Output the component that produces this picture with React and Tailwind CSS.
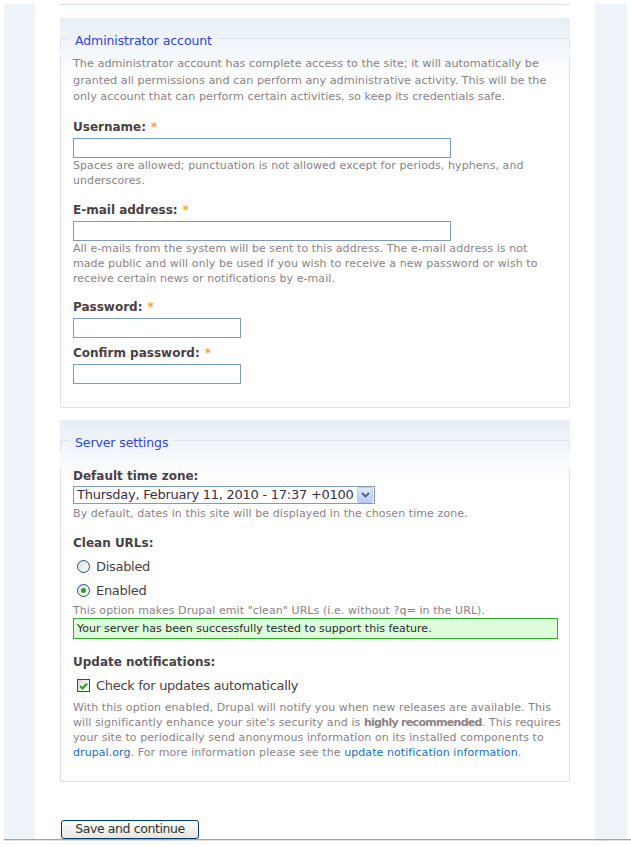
const tahoma = "font-['DejaVu_Sans',sans-serif]"

function Legend({ children }) {
  return (
    <div className="flex">
      <div className="w-[9px] mt-[5px] border-t border-l border-[#d8e5ef]" />
      <span className={`${tahoma} px-[6px] text-[12.5px] leading-[16px] tracking-[-0.1px] text-[#2b44d6]`}>{children}</span>
      <div className="flex-1 mt-[5px] border-t border-r border-[#d8e5ef]" />
    </div>
  )
}

function Label({ children, required, className = '' }) {
  return (
    <div className={`text-[12px] leading-[16px] font-bold text-[#4a4145] ${className}`}>
      {children}
      {required && <span className="ml-[5px] text-[#f8a51c]">*</span>}
    </div>
  )
}

function Desc({ children, className = '' }) {
  return <div className={`text-[11px] leading-[15px] tracking-[0.08px] text-[#8b8287] ${className}`}>{children}</div>
}

function TextInput({ width }) {
  return <div className={`${width} h-[20px] mt-[3px] border border-[#7f9db9] bg-white`} />
}

function Radio({ checked, label }) {
  return (
    <div className="flex items-center h-[24px] pl-[4px]">
      <span className="w-[13px] h-[13px] rounded-full border border-[#1c5180] bg-gradient-to-br from-[#dcdcd6] to-white flex items-center justify-center">
        {checked && <span className="w-[5px] h-[5px] rounded-full bg-[#21a121]" />}
      </span>
      <span className={`${tahoma} ml-[6px] text-[13px] tracking-[-0.3px] text-[#4a4145]`}>{label}</span>
    </div>
  )
}

export default function App() {
  return (
    <div className="w-[631px] h-[847px] bg-white pt-[4px] font-['DejaVu_Sans',sans-serif] overflow-hidden">
      <div className="flex h-[835px] pl-[4px] pr-[4px]">
        <div className="w-[31px] bg-[#edf4fa]" />
        <div className="w-[560px] px-[25px]">
          <div className="border-t border-[#d3e4f0]" />

          {/* Administrator account */}
          <div className="mt-[13px] pt-[15px] bg-gradient-to-b from-[#e6eef6] to-white to-[60px] bg-no-repeat">
            <Legend>Administrator account</Legend>
            <div className="border-x border-b border-[#d8e5ef] px-[12px] pb-[23px]">
              <p className={`${tahoma} mt-[7px] text-[11.25px] leading-[16.5px] text-[#8b8287]`}>
                The administrator account has complete access to the site; it will automatically be granted all permissions and can perform any administrative activity. This will be the only account that can perform certain activities, so keep its credentials safe.
              </p>

              <Label required className="mt-[13px]">Username:</Label>
              <TextInput width="w-[378px]" />
              <Desc>Spaces are allowed; punctuation is not allowed except for periods, hyphens, and underscores.</Desc>

              <Label required className="mt-[14px]">E-mail address:</Label>
              <TextInput width="w-[378px]" />
              <Desc>All e-mails from the system will be sent to this address. The e-mail address is not made public and will only be used if you wish to receive a new password or wish to receive certain news or notifications by e-mail.</Desc>

              <Label required className="mt-[13px]">Password:</Label>
              <TextInput width="w-[168px]" />

              <Label required className="mt-[7px]">Confirm password:</Label>
              <TextInput width="w-[168px]" />
            </div>
          </div>

          {/* Server settings */}
          <div className="mt-[12px] pt-[15px] bg-gradient-to-b from-[#e6eef6] to-white to-[60px] bg-no-repeat">
            <Legend>Server settings</Legend>
            <div className="border-x border-b border-[#d8e5ef] px-[12px] pb-[21px]">
              <Label className="mt-[17px]">Default time zone:</Label>
              <div className="mt-[2px] w-[302px] h-[18px] border border-[#7f9db9] bg-white flex items-center">
                <span className={`${tahoma} flex-1 pl-[3px] text-[13px] leading-[16px] tracking-[-0.25px] text-[#3b2f45]`}>
                  Thursday, February 11, 2010 - 17:37 +0100
                </span>
                <span className="w-[16px] h-[16px] mr-px rounded-[2px] border border-[#b4c8f4] bg-gradient-to-b from-[#dfe8fd] to-[#b9cdf6] flex items-center justify-center">
                  <svg width="9" height="6" viewBox="0 0 9 6">
                    <path d="M1 1 L4.5 4.5 L8 1" fill="none" stroke="#4d6185" strokeWidth="1.8" />
                  </svg>
                </span>
              </div>
              <Desc className="mt-[2px]">By default, dates in this site will be displayed in the chosen time zone.</Desc>

              <Label className="mt-[14px]">Clean URLs:</Label>
              <div className="mt-[4px]">
                <Radio label="Disabled" />
                <Radio checked label="Enabled" />
              </div>
              <Desc>This option makes Drupal emit "clean" URLs (i.e. without ?q= in the URL).</Desc>
              <div className="w-[485px] h-[21px] border border-[#2fb12f] bg-[#dcfcda] pl-[3px] text-[11px] leading-[19px] text-[#2a2a2a]">
                Your server has been successfully tested to support this feature.
              </div>

              <Label className="mt-[15px]">Update notifications:</Label>
              <div className="mt-[4px] flex items-center h-[24px] pl-[4px]">
                <span className="w-[13px] h-[13px] border border-[#1c5180] bg-gradient-to-br from-[#dcdcd6] to-white flex items-center justify-center">
                  <svg width="9" height="8" viewBox="0 0 9 8">
                    <path d="M1 4 L3.5 6.5 L8 1.5" fill="none" stroke="#21a121" strokeWidth="2" />
                  </svg>
                </span>
                <span className={`${tahoma} ml-[6px] text-[13px] tracking-[-0.3px] text-[#4a4145]`}>Check for updates automatically</span>
              </div>
              <Desc className="mt-[2px] mr-[-8px] tracking-[-0.05px]">
                With this option enabled, Drupal will notify you when new releases are available. This will significantly enhance your site's security and is <strong className="font-bold tracking-[-0.7px]">highly recommended</strong>. This requires your site to periodically send anonymous information on its installed components to <a className="text-[#1b6dc1]">drupal.org</a>. For more information please see the <a className="text-[#1b6dc1]">update notification information</a>.
              </Desc>
            </div>
          </div>

          <button className={`${tahoma} mt-[38px] ml-px w-[138px] h-[19px] rounded-[3px] border border-[#003c74] bg-gradient-to-b from-white to-[#e6e4dc] text-[12.5px] leading-[16px] tracking-[-0.4px] text-[#333]`}>
            Save and continue
          </button>
        </div>
        <div className="w-[32px] bg-[#edf4fa]" />
      </div>
      <div className="ml-[4px] h-[2px] border-t border-[#a4a4a4] bg-[#dedede]" />
    </div>
  )
}
